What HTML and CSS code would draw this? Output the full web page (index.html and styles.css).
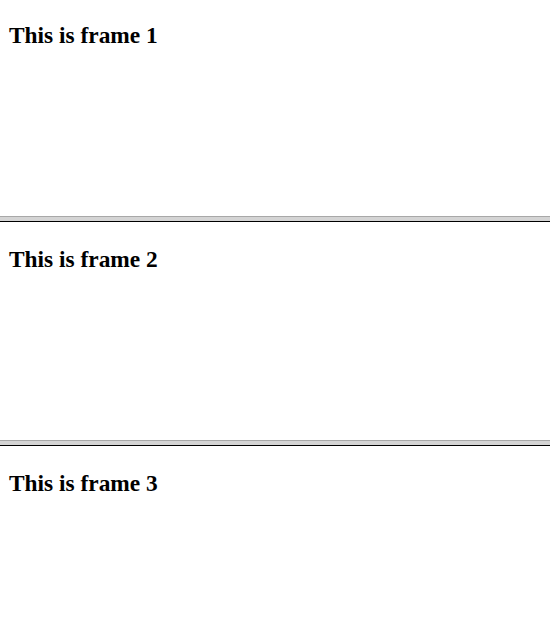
FILE: index.html
```html
<!DOCTYPE html>
<html>
<head>
<meta charset="utf-8">
<link rel="stylesheet" href="styles.css">
</head>
<body>
<div class="frameset">
  <div class="frame frame-first"><h2 class="title">This is frame 1</h2></div>
  <div class="divider"></div>
  <div class="frame"><h2 class="title">This is frame 2</h2></div>
  <div class="divider"></div>
  <div class="frame frame-last"><h2 class="title">This is frame 3</h2></div>
</div>
</body>
</html>
```
FILE: styles.css
```css
html, body {
  margin: 0;
  padding: 0;
  background: #ffffff;
  overflow: hidden;
}
.frameset {
  display: flex;
  flex-direction: column;
  width: 550px;
  height: 641px;
}
.frame {
  height: 218px;
  padding: 0 9px;
  overflow: hidden;
  box-sizing: border-box;
  background: #ffffff;
  padding-top: 2px;
}
.frame-first {
  height: 216px;
  padding-top: 0;
}
.frame-last {
  flex: 1;
}
.divider {
  height: 6px;
  box-sizing: border-box;
  background: #d4d4d4;
  border-top: 1px solid #a8a8a8;
  border-bottom: 1px solid #000000;
}
.title {
  font-family: "Liberation Serif", "Times New Roman", serif;
  font-size: 23.4px;
  font-weight: bold;
  margin: 22px 0 0;
  color: #000;
}
```
